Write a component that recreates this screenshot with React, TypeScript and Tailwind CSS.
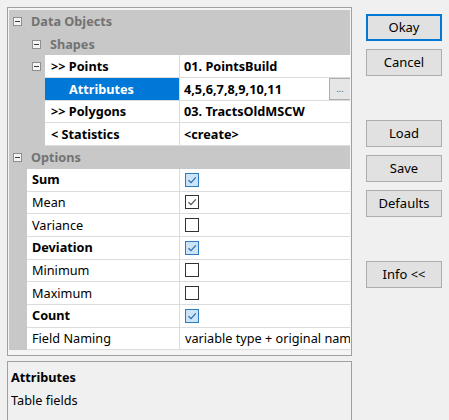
import React from 'react';

const FONT = { fontFamily: '"Noto Sans", "Open Sans", sans-serif' };

function Minus() {
    return (
        <span className="w-[9px] h-[9px] border border-[#8f8f8f] bg-[#f4f4f4] flex items-center justify-center shrink-0">
            <span className="w-[5px] h-px bg-[#3c3c3c]" />
        </span>
    );
}

function CheckBox({ checked, active }: { checked?: boolean; active?: boolean }) {
    const box = active ? 'border-[#2e7ac2] bg-[#cce4f7]' : 'border-[#333333] bg-white';
    const stroke = active ? '#2e6fb0' : '#555555';
    return (
        <span className={`w-[14px] h-[14px] border ${box} flex items-center justify-center`}>
            {checked && (
                <svg width="10" height="10" viewBox="0 0 10 10">
                    <path d="M1.5 5.2 L4 7.6 L8.8 2.4" fill="none" stroke={stroke} strokeWidth="1.3" />
                </svg>
            )}
        </span>
    );
}

function Header({ label, indent }: { label: string; indent: number }) {
    return (
        <div className="h-[22.7px] flex items-center bg-[#c8c8c8]" style={{ paddingLeft: indent }}>
            <Minus />
            <span className="ml-[9px] font-bold text-[#737373]">{label}</span>
        </div>
    );
}

function PropRow({
    strip,
    name,
    bold,
    nameIndent = 0,
    selected,
    expander,
    children,
}: {
    strip: number;
    name: string;
    bold?: boolean;
    nameIndent?: number;
    selected?: boolean;
    expander?: boolean;
    children?: React.ReactNode;
}) {
    return (
        <div className="h-[22.7px] flex bg-[#c8c8c8]">
            <div className="shrink-0 flex items-center justify-end pr-[4px]" style={{ width: strip }}>
                {expander && <Minus />}
            </div>
            <div className="flex-1 min-w-0 flex border-b border-[#dcdcdc]">
                <div
                    className={`w-[135px] shrink-0 flex items-center border-r border-[#dcdcdc] ${
                        selected ? 'bg-[#0078d7] text-white' : 'bg-white text-black'
                    } ${bold ? 'font-bold' : ''}`}
                    style={{ paddingLeft: 6 + nameIndent }}
                >
                    {name}
                </div>
                <div className="flex-1 min-w-0 flex items-center bg-white pl-[4px] overflow-hidden whitespace-nowrap">
                    {children}
                </div>
            </div>
        </div>
    );
}

function OptRow({ name, bold, children }: { name: string; bold?: boolean; children?: React.ReactNode }) {
    return (
        <div className="h-[22.7px] flex bg-[#c8c8c8]">
            <div className="w-[18px] shrink-0" />
            <div className="flex-1 min-w-0 flex border-b border-[#dcdcdc]">
                <div
                    className={`w-[153px] shrink-0 flex items-center bg-white pl-[5px] border-r border-[#dcdcdc] text-black ${
                        bold ? 'font-bold' : ''
                    }`}
                >
                    {name}
                </div>
                <div className="flex-1 min-w-0 flex items-center bg-white pl-[5px] overflow-hidden whitespace-nowrap">
                    {children}
                </div>
            </div>
        </div>
    );
}

function Btn({ label, focused }: { label: string; focused?: boolean }) {
    return (
        <button
            className={`w-[76px] h-[27px] bg-[#e1e1e1] text-black text-[13px] flex items-center justify-center ${
                focused ? 'border-2 border-[#0078d7]' : 'border border-[#adadad]'
            }`}
        >
            {label}
        </button>
    );
}

export default function App() {
    return (
        <div className="w-[449px] h-[420px] bg-[#f0f0f0] overflow-hidden flex text-[12.7px] leading-none" style={FONT}>
            <div className="w-[352px] pl-[7px] pt-[7px] shrink-0 flex flex-col">
                {/* property grid */}
                <div className="h-[349px] shrink-0 border border-[#a0a0a0] bg-[#f4f4f4] pl-px pr-px pt-[2px]">
                    <Header label="Data Objects" indent={4} />
                    <Header label="Shapes" indent={23} />
                    <PropRow strip={36} name=">> Points" bold expander>
                        <span className="font-bold">01. PointsBuild</span>
                    </PropRow>
                    <PropRow strip={36} name="Attributes" bold selected nameIndent={18}>
                        <span className="flex-1 font-bold">4,5,6,7,8,9,10,11</span>
                        <span className="w-[22px] h-[22px] -mr-px bg-[#e6e6e6] border border-[#adadad] flex items-end justify-center pb-[6px] text-[9px] text-[#555]">
                            ...
                        </span>
                    </PropRow>
                    <PropRow strip={36} name=">> Polygons" bold>
                        <span className="font-bold">03. TractsOldMSCW</span>
                    </PropRow>
                    <PropRow strip={36} name="< Statistics" bold>
                        <span className="font-bold">&lt;create&gt;</span>
                    </PropRow>
                    <Header label="Options" indent={4} />
                    <OptRow name="Sum" bold>
                        <CheckBox checked active />
                    </OptRow>
                    <OptRow name="Mean">
                        <CheckBox checked />
                    </OptRow>
                    <OptRow name="Variance">
                        <CheckBox />
                    </OptRow>
                    <OptRow name="Deviation" bold>
                        <CheckBox checked active />
                    </OptRow>
                    <OptRow name="Minimum">
                        <CheckBox />
                    </OptRow>
                    <OptRow name="Maximum">
                        <CheckBox />
                    </OptRow>
                    <OptRow name="Count" bold>
                        <CheckBox checked active />
                    </OptRow>
                    <OptRow name="Field Naming">
                        <span className="text-black">variable type + original name</span>
                    </OptRow>
                </div>

                {/* description box */}
                <div className="mt-[5px] h-[70px] shrink-0 border border-[#a0a0a0] bg-[#f0f0f0] px-[3px] pt-[9px] flex flex-col gap-[10px] text-black">
                    <span className="font-bold">Attributes</span>
                    <span>Table fields</span>
                </div>
            </div>

            <div className="ml-[14px] pt-[14px] flex flex-col">
                <Btn label="Okay" focused />
                <div className="mt-[8px]">
                    <Btn label="Cancel" />
                </div>
                <div className="mt-[44px]">
                    <Btn label="Load" />
                </div>
                <div className="mt-[8px]">
                    <Btn label="Save" />
                </div>
                <div className="mt-[8px]">
                    <Btn label="Defaults" />
                </div>
                <div className="mt-[44px]">
                    <Btn label="Info <<" />
                </div>
            </div>
        </div>
    );
}
